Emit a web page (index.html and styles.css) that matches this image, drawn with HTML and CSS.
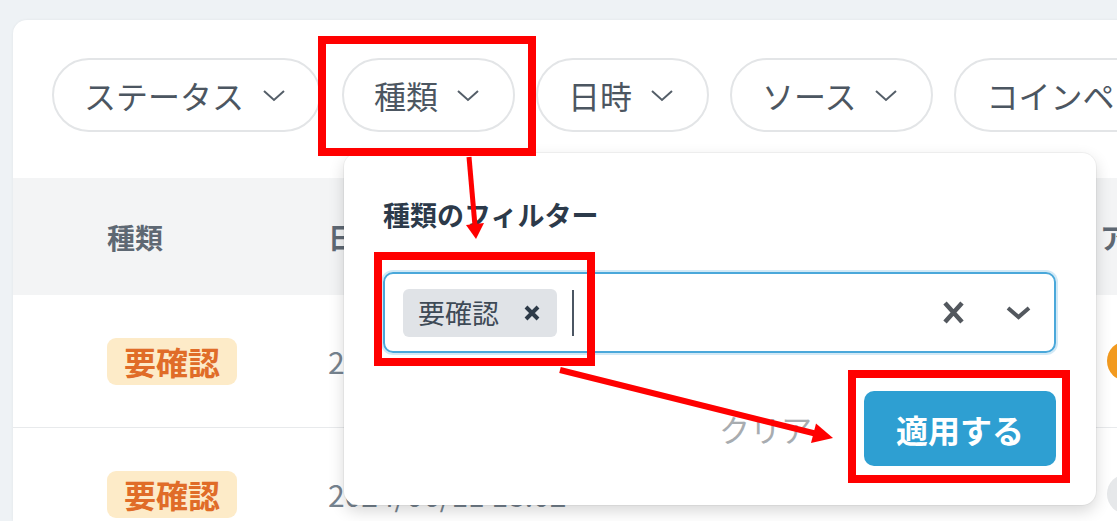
FILE: index.html
```html
<!DOCTYPE html>
<html lang="ja">
  <head>
    <meta charset="UTF-8" />
    <meta name="viewport" content="width=device-width, initial-scale=1.0" />
    <title>取引一覧</title>
    <link rel="stylesheet" href="styles.css">
  </head>
  <body>
    <div class="page">
      <div class="card">
        <div class="filters">
          <div class="pill">ステータス <svg class="chev" viewBox="0 0 24 13"><polyline points="2,2 12,11 22,2" /></svg></div>
          <div class="pill">種類 <svg class="chev" viewBox="0 0 24 13"><polyline points="2,2 12,11 22,2" /></svg></div>
          <div class="pill">日時 <svg class="chev" viewBox="0 0 24 13"><polyline points="2,2 12,11 22,2" /></svg></div>
          <div class="pill">ソース <svg class="chev" viewBox="0 0 24 13"><polyline points="2,2 12,11 22,2" /></svg></div>
          <div class="pill">コインペア <svg class="chev" viewBox="0 0 24 13"><polyline points="2,2 12,11 22,2" /></svg></div>
        </div>

        <div class="table">
          <div class="thead">
            <div class="col-type">種類</div>
            <div class="col-date">日時</div>
            <div class="col-amount">数量</div>
            <div class="col-last head-last">アドレス</div>
          </div>
          <div class="row">
            <div class="col-type"><span class="badge">要確認</span></div>
            <div class="col-date date">2024/06/12 10:24</div>
            <div class="col-amount"></div>
            <div class="col-last"><span class="dot dot-orange"></span></div>
          </div>
          <div class="row">
            <div class="col-type"><span class="badge">要確認</span></div>
            <div class="col-date date">2024/06/11 18:02</div>
            <div class="col-amount"></div>
            <div class="col-last"><span class="dot dot-grey"></span></div>
          </div>
        </div>

        <!-- 種類フィルターのポップオーバー -->
        <div class="popover">
          <div class="pop-title">種類のフィルター</div>
          <div class="select">
            <span class="tag">要確認
              <svg class="tag-x" viewBox="0 0 18 18"><path d="M3 3 L15 15 M15 3 L3 15" /></svg>
            </span>
            <span class="caret"></span>
            <span class="spacer"></span>
            <svg class="clear-x" viewBox="0 0 23 25"><path d="M3 3 L20 22 M20 3 L3 22" /></svg>
            <svg class="sel-chev" viewBox="0 0 27 15"><polyline points="3,3 13.5,12 24,3" /></svg>
          </div>
          <div class="actions">
            <span class="clear">クリア</span>
            <button class="apply">適用する</button>
          </div>
        </div>
      </div>
    </div>

    <svg class="marks" viewBox="0 0 1117 521">
      <rect x="322" y="40" width="210" height="112" />
      <rect x="378" y="256" width="213" height="106" />
      <rect x="852" y="374" width="214" height="105" />
      <line x1="469" y1="157" x2="475" y2="226" stroke-width="5" />
      <polygon points="466,225 484,223 476,239" />
      <line x1="560" y1="370" x2="815" y2="433.5" stroke-width="6" />
      <polygon points="833,438 816,423.5 811,443" />
    </svg>
  </body>
</html>
```

FILE: styles.css
```css
body {
  margin: 0;
  height: 521px;
  overflow: hidden;
  background: #eef2f5;
  font-family: "Noto Sans CJK JP", "Noto Sans", sans-serif;
  color: #3e4a56;
  position: relative;
}

.page {
  padding: 20px 0 0 13px;
}

.card {
  position: relative;
  width: 1200px;
  height: 501px;
  background: #fff;
  border-radius: 14px 0 0 0;
  box-shadow: 0 0 3px rgba(0, 0, 0, 0.06);
  overflow: hidden;
}

.filters {
  display: flex;
  gap: 21px;
  padding: 38px 0 0 39px;
  white-space: nowrap;
}

.pill {
  flex-shrink: 0;
  display: flex;
  align-items: center;
  gap: 18px;
  height: 74px;
  box-sizing: border-box;
  padding: 0 33px 0 30px;
  border: 2px solid #e3e5e7;
  border-radius: 37px;
  font-size: 32px;
  line-height: 1;
  color: #4c5661;
}

.chev {
  width: 24px;
  height: 13px;
  fill: none;
  stroke: #555f69;
  stroke-width: 2;
}

.table {
  margin-top: 46px;
}

.thead,
.row {
  display: flex;
  align-items: center;
  padding-left: 94px;
  white-space: nowrap;
}

.thead {
  height: 117px;
  background: #f3f4f5;
  font-size: 28px;
  font-weight: 700;
  color: #5e6873;
}

.row {
  height: 132px;
  border-bottom: 1px solid #e8eaec;
}

.col-type {
  width: 221px;
  flex-shrink: 0;
}

.col-date {
  width: 400px;
  flex-shrink: 0;
}

.col-amount {
  width: 344px;
  flex-shrink: 0;
}

.col-last {
  padding-left: 35px;
}

.head-last {
  padding-left: 28px;
}

.date {
  font-size: 30px;
  line-height: 1;
  color: #76838f;
}

.badge {
  display: inline-flex;
  align-items: center;
  height: 47px;
  padding: 0 17px;
  background: #fdebc8;
  color: #e06c28;
  font-size: 32px;
  font-weight: 700;
  border-radius: 9px;
}

.dot {
  display: block;
  width: 40px;
  height: 40px;
  border-radius: 50%;
}

.dot-orange {
  background: #f29a1f;
}

.dot-grey {
  background: #e6e8ea;
}

.popover {
  position: absolute;
  left: 331px;
  top: 133px;
  width: 752px;
  height: 352px;
  box-sizing: border-box;
  padding: 44px 40px 38px 39px;
  background: #fff;
  border-radius: 14px;
  box-shadow: 0 6px 16px rgba(0, 0, 0, 0.16), 0 0 0 1px rgba(0, 0, 0, 0.04);
}

.pop-title {
  font-size: 27px;
  font-weight: 700;
  line-height: 35px;
  color: #2c3a4a;
  margin-bottom: 40px;
}

.select {
  display: flex;
  align-items: center;
  height: 81px;
  box-sizing: border-box;
  padding: 0 22px 0 18px;
  border: 2px solid #4aa8da;
  border-radius: 10px;
  box-shadow: 0 0 0 2px rgba(74, 168, 218, 0.25);
}

.tag {
  display: flex;
  align-items: center;
  gap: 24px;
  height: 48px;
  padding: 0 16px 0 15px;
  background: #e0e3e7;
  border-radius: 6px;
  font-size: 27px;
  color: #3e4a56;
}

.tag-x {
  width: 18px;
  height: 18px;
  fill: none;
  stroke: #2d3a48;
  stroke-width: 4;
}

.caret {
  width: 2px;
  height: 46px;
  margin-left: 15px;
  background: #4b5663;
}

.spacer {
  flex: 1;
}

.clear-x {
  width: 23px;
  height: 25px;
  fill: none;
  stroke: #53585e;
  stroke-width: 4.5;
}

.sel-chev {
  width: 27px;
  height: 15px;
  margin-left: 40px;
  fill: none;
  stroke: #53585e;
  stroke-width: 4;
}

.actions {
  display: flex;
  justify-content: flex-end;
  align-items: center;
  gap: 52px;
  margin-top: 38px;
}

.clear {
  font-size: 31px;
  color: #a8acb0;
}

.apply {
  width: 192px;
  height: 75px;
  border: none;
  border-radius: 10px;
  background: #2e9fd2;
  color: #fff;
  font-family: inherit;
  font-size: 32px;
  font-weight: 700;
}

.marks {
  position: absolute;
  top: 0;
  left: 0;
  width: 1117px;
  height: 521px;
  pointer-events: none;
}

.marks rect {
  fill: none;
  stroke: #ff0000;
  stroke-width: 8;
}

.marks line {
  stroke: #ff0000;
}

.marks polygon {
  fill: #ff0000;
}
```
